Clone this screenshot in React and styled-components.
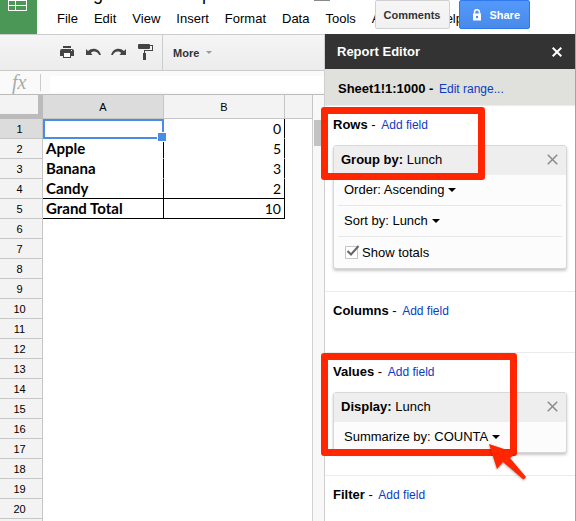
import React from "react";
import styled, { createGlobalStyle, css } from "styled-components";

const GlobalStyle = createGlobalStyle`
  * { box-sizing: border-box; }
  body {
    margin: 0;
    background: #fff;
    color: #000;
    font: 13px/20px "Liberation Sans", Arial, sans-serif;
  }
  button, input { font: inherit; }
`;

const Page = styled.div`
  height: 100vh;
  display: flex;
  flex-direction: column;
  overflow: hidden;
  border-right: 1px solid #a3a3a3;
`;

const Header = styled.header`
  position: relative;
  display: flex;
  flex: none;
  height: 34px;
`;

const Logo = styled.a`
  flex: none;
  width: 37px;
  background: #4b9856;
  svg { display: block; }
`;

const Heading = styled.div`
  flex: 1;
  min-width: 0;
  padding-left: 20px;
`;

const DocTitle = styled.div`
  display: flex;
  align-items: flex-end;
  height: 4px;
  overflow: hidden;
  font-size: 18px;
  white-space: nowrap;
  svg { flex: none; margin-left: 36px; }
`;

const Menu = styled.nav`
  display: flex;
  gap: 16px;
  padding-top: 5px;
`;

const MenuItem = styled.button`
  padding: 0;
  border: 0;
  background: none;
  color: #000;
  line-height: 20px;
  white-space: nowrap;
`;

const HeaderActions = styled.div`
  position: absolute;
  top: 0;
  right: 45px;
  display: flex;
  gap: 9px;
`;

const ActionButton = styled.button`
  display: flex;
  align-items: center;
  gap: 7px;
  height: 29px;
  padding: 0 9px 0 8px;
  border: 1px solid #d0d0d0;
  border-radius: 2px;
  background: linear-gradient(#f6f6f6, #f1f1f1);
  color: #333;
  font-size: 11px;
  font-weight: bold;
  ${(p) =>
    p.$primary &&
    css`
      padding: 0 9px 0 12px;
      border-color: #3079ed;
      background: linear-gradient(#5398fb, #4a8be9);
      color: #fff;
    `}
`;

const Workspace = styled.div`
  display: flex;
  flex: 1;
  min-height: 0;
`;

const SheetArea = styled.main`
  flex: 1;
  min-width: 0;
  display: flex;
  flex-direction: column;
`;

const Toolbar = styled.div`
  display: flex;
  align-items: center;
  flex: none;
  height: 37px;
  border-top: 1px solid #ccc;
  border-bottom: 1px solid #ccc;
  background: linear-gradient(#f5f5f5, #ececec);
`;

const ToolGroup = styled.div`
  display: flex;
  align-items: center;
  gap: 8px;
  height: 100%;
  padding: 0 8px 0 58px;
  border-right: 1px solid #ccc;
`;

const ToolButton = styled.button`
  display: flex;
  padding: 0;
  border: 0;
  background: none;
  color: #444;
`;

const MoreButton = styled(ToolButton)`
  align-items: center;
  gap: 7px;
  padding: 0 10px;
  color: #333;
  font-size: 11px;
  font-weight: bold;
`;

const Caret = styled.span`
  display: inline-block;
  vertical-align: middle;
  border: solid transparent;
  border-width: 4px 4px 0;
  border-top-color: ${(p) => (p.$muted ? "#999" : "#000")};
  ${(p) => p.$muted && "border-width: 3px 3px 0;"}
`;

const FormulaBar = styled.div`
  display: flex;
  align-items: center;
  flex: none;
  height: 24px;
  border-bottom: 1px solid #bbb;
  background: #fafafa;
`;

const FormulaLabel = styled.label`
  width: 41px;
  padding-left: 12px;
  border-right: 1px solid #ccc;
  color: #aaa;
  font: italic 20px/17px "Liberation Serif", "Times New Roman", serif;
`;

const FormulaInput = styled.input`
  flex: 1;
  min-width: 0;
  height: 16px;
  margin: 2px 0 0 9px;
  padding: 0 4px;
  border: 0;
  background: #fff;
`;

const GridArea = styled.div`
  display: flex;
  flex: 1;
  min-height: 0;
  overflow: hidden;
`;

const Grid = styled.table`
  flex: 1;
  align-self: flex-start;
  table-layout: fixed;
  border-spacing: 0;
  width: 100%;
  th, td { height: 20px; padding: 0; }
`;

const Column = styled.col`
  width: ${(p) => p.$width};
`;

const headerLine = css`
  border-right: 1px solid #c6c6c6;
  border-bottom: 1px solid #c6c6c6;
  background: ${(p) => (p.$active ? "#dcdcdc" : "#f3f3f3")};
  font-size: 11px;
  font-weight: normal;
  line-height: 18px;
  text-align: center;
`;

const ColumnHeader = styled.th`
  ${headerLine}
  && { height: 24px; }
`;

const Corner = styled(ColumnHeader)`
  border-right: 5px solid #bbb;
  border-bottom: 5px solid #bbb;
`;

const RowHeader = styled.th`
  ${headerLine}
  && { padding-right: 3px; }
`;

const Cell = styled.td`
  position: relative;
  border-right: 1px solid ${(p) => (p.$framed ? "#000" : "transparent")};
  border-bottom: 1px solid ${(p) => (p.$ruled ? "#000" : "transparent")};
  font: ${(p) => (p.$number ? "normal 14px" : "bold 15px")}/19px Lato, Carlito, sans-serif;
  text-align: ${(p) => (p.$number ? "right" : "left")};
  white-space: nowrap;
  &&& { padding: 0 3px; }
`;

const EdgeCell = styled.td`
  border-right: 1px solid #d0d0d0;
`;

const Selection = styled.div`
  position: absolute;
  z-index: 1;
  inset: 0 -1px -1px 0;
  border: 2px solid #4a8be4;
  &::after {
    content: "";
    position: absolute;
    right: -5px;
    bottom: -5px;
    width: 8px;
    height: 8px;
    border: 1px solid #fff;
    background: #4a8be4;
  }
`;

const ScrollTrack = styled.div`
  flex: none;
  width: 11px;
  padding: 25px 1px 0;
  background: #f8f8f8;
`;

const ScrollThumb = styled.div`
  height: 26px;
  background: #c3c3c3;
`;

const Panel = styled.aside`
  flex: none;
  width: 251px;
  border-left: 1px solid #d0d0d0;
  background: #fff;
`;

const PanelHeader = styled.div`
  display: flex;
  align-items: center;
  justify-content: space-between;
  height: 35px;
  padding: 0 13px 0 12px;
  background: #333;
  color: #fff;
`;

const PanelTitle = styled.h2`
  margin: 0;
  font-size: 13px;
`;

const IconButton = styled.button`
  display: flex;
  padding: 0;
  border: 0;
  background: none;
  color: ${(p) => (p.$light ? "#fff" : "#8c8c8c")};
`;

const RangeBar = styled.div`
  height: 37px;
  padding: 10px 13px 9px;
  border-bottom: 1px solid #ececec;
  background: #e0e1dc;
`;

const PanelLink = styled.a`
  margin-left: 2px;
  color: #0b3cc1;
  font-size: 12px;
  text-decoration: none;
`;

const Section = styled.section`
  position: relative;
  min-height: 61px;
  padding: 9px 8px 22px;
  border-bottom: 1px solid #ebebeb;
`;

const SectionTitle = styled.div`
  line-height: 20px;
`;

const Card = styled.div`
  margin-top: 10px;
  border: 1px solid #d8d8d8;
  border-radius: 3px;
  background: #fcfcfc;
  box-shadow: 0 2px 3px rgba(0, 0, 0, 0.22);
`;

const CardHeader = styled.div`
  display: flex;
  align-items: center;
  justify-content: space-between;
  height: 29px;
  padding: 0 8px 2px 7px;
  background: #eee;
`;

const CardRow = styled.div`
  display: flex;
  align-items: center;
  height: 31px;
  margin: 0 4px;
  padding-left: 6px;
  border-bottom: 1px solid #e8e8e8;
  &:last-child {
    height: ${(p) => (p.$tall ? 31 : 30)}px;
    border-bottom: 0;
  }
`;

const Picker = styled.button`
  display: flex;
  align-items: center;
  gap: 4px;
  padding: 0;
  border: 0;
  background: none;
  color: #000;
`;

const CheckLabel = styled.label`
  display: flex;
  align-items: center;
  gap: 4px;
`;

const CheckBox = styled.span`
  position: relative;
  display: flex;
  width: 14px;
  height: 14px;
  input {
    appearance: none;
    width: 13px;
    height: 13px;
    margin: 0 0 0 1px;
    border: 1px solid #c6c6c6;
    background: #fff;
  }
  svg {
    position: absolute;
    left: 2px;
    top: -1px;
    display: none;
    pointer-events: none;
  }
  input:checked + svg { display: block; }
`;

const Highlight = styled.div`
  position: absolute;
  z-index: 2;
  left: -4px;
  top: ${(p) => p.$top}px;
  width: ${(p) => p.$width}px;
  height: ${(p) => p.$height}px;
  border: 7px solid #ff2600;
  border-radius: 3px;
  pointer-events: none;
`;

const Pointer = styled.svg`
  position: absolute;
  z-index: 3;
  left: 163px;
  top: 90px;
  filter: drop-shadow(0 1px 1px rgba(0, 0, 0, 0.35));
`;

const Cross = ({ size = 10, weight = 1.6 }) => (
  <svg width={size} height={size} viewBox="0 0 10 10" fill="none" stroke="currentColor" strokeWidth={weight}>
    <path d="M.7.7 9.3 9.3M9.3.7.7 9.3" />
  </svg>
);

const PrintIcon = () => (
  <svg width="18" height="18" viewBox="0 0 18 18" fill="currentColor">
    <path d="M5 2h8v2H5zM4 5h10q2 0 2 2v5h-3v-3H5v3H2V7q0-2 2-2z" />
    <path d="M6 9h6v4H6z" fill="#fafafa" />
    <path d="M5 9h1v4h6V9h1v5H5z" />
    <path d="M13 6h1v1h-1z" fill="#eee" />
  </svg>
);

const UndoIcon = ({ mirrored }) => (
  <svg width="18" height="18" viewBox="0 0 18 18" fill="currentColor">
    <path
      transform={mirrored ? "matrix(-1 0 0 1 18 0)" : undefined}
      d="M2 5l2 2C6.500 4.800 9 4.300 11.500 5c2.800.8 4.600 2.800 5.400 6h-1.800c-1-2.200-2.600-3.300-4.600-3.400-1.600 0-2.600.5-3.600 1.400L8.500 11H2z"
    />
  </svg>
);

const PaintIcon = () => (
  <svg width="18" height="18" viewBox="0 0 18 18" fill="currentColor">
    <path d="M3 0h10q1 0 1 1v3q0 1-1 1H3Q2 5 2 4V1q0-1 1-1z" />
    <path d="M14 1h3v6H9v3H8V6h8V2h-2zM7 9h3v7H7z" />
  </svg>
);

const SheetIcon = () => (
  <svg width="37" height="14" viewBox="0 0 37 14" fill="none" stroke="#fff">
    <path d="M8.500 0v10.500h18V0M8 .5h19M8 5.500h19M15.500 0v10" />
  </svg>
);

const LockIcon = () => (
  <svg width="10" height="12" viewBox="0 0 10 12">
    <path d="M2.500 5V3.200a2.500 2.500 0 0 1 5 0V5" fill="none" stroke="#fff" strokeWidth="1.500" />
    <path d="M1 4.500h8v7H1z" fill="#fff" />
    <circle cx="5" cy="8" r="1.200" fill="#4a8be9" />
  </svg>
);

const FolderIcon = () => (
  <svg width="16" height="18" viewBox="0 0 16 18" fill="#8a8a8a">
    <path d="M0 1h6l2 2h8v12H0z" />
  </svg>
);

const menus = ["File", "Edit", "View", "Insert", "Format", "Data", "Tools", "Add-ons", "Help"];

const data = [
  ["", "0"],
  ["Apple", "5"],
  ["Banana", "3"],
  ["Candy", "2"],
  ["Grand Total", "10"],
];

const rowNumbers = Array.from({ length: 21 }, (_, i) => i + 1);

function SheetRow({ number }) {
  const values = data[number - 1];
  const ruled = number === 4 || number === 5;
  return (
    <tr>
      <RowHeader scope="row" $active={number === 1}>{number}</RowHeader>
      <Cell $framed={!!values} $ruled={ruled}>
        {values?.[0]}
        {number === 1 && <Selection />}
      </Cell>
      <Cell $number $framed={!!values} $ruled={ruled}>{values?.[1]}</Cell>
      <EdgeCell />
    </tr>
  );
}

function FieldTitle({ name }) {
  return (
    <SectionTitle>
      <b>{name}</b> - <PanelLink href="#add">Add field</PanelLink>
    </SectionTitle>
  );
}

function FieldHeader({ label, value }) {
  return (
    <CardHeader>
      <span><b>{label}</b> {value}</span>
      <IconButton aria-label="Remove field"><Cross size={11} weight={1.4} /></IconButton>
    </CardHeader>
  );
}

function Option({ children }) {
  return (
    <CardRow>
      <Picker>{children}<Caret /></Picker>
    </CardRow>
  );
}

export default function App() {
  return (
    <>
      <GlobalStyle />
      <Page>
        <Header>
          <Logo href="#home" aria-label="Sheets home"><SheetIcon /></Logo>
          <Heading>
            <DocTitle>Design Form Sample Sheet<FolderIcon /></DocTitle>
            <Menu>
              {menus.map((name) => <MenuItem key={name}>{name}</MenuItem>)}
            </Menu>
          </Heading>
          <HeaderActions>
            <ActionButton>Comments</ActionButton>
            <ActionButton $primary><LockIcon />Share</ActionButton>
          </HeaderActions>
        </Header>
        <Workspace>
          <SheetArea>
            <Toolbar>
              <ToolGroup>
                <ToolButton aria-label="Print"><PrintIcon /></ToolButton>
                <ToolButton aria-label="Undo"><UndoIcon /></ToolButton>
                <ToolButton aria-label="Redo"><UndoIcon mirrored /></ToolButton>
                <ToolButton aria-label="Paint format"><PaintIcon /></ToolButton>
              </ToolGroup>
              <MoreButton>More<Caret $muted /></MoreButton>
            </Toolbar>
            <FormulaBar>
              <FormulaLabel htmlFor="formula">fx</FormulaLabel>
              <FormulaInput id="formula" />
            </FormulaBar>
            <GridArea>
              <Grid>
                <colgroup>
                  <Column $width="43px" />
                  <Column $width="121px" />
                  <Column $width="121px" />
                  <Column $width="auto" />
                </colgroup>
                <thead>
                  <tr>
                    <Corner />
                    <ColumnHeader scope="col" $active>A</ColumnHeader>
                    <ColumnHeader scope="col">B</ColumnHeader>
                    <ColumnHeader />
                  </tr>
                </thead>
                <tbody>
                  {rowNumbers.map((n) => <SheetRow key={n} number={n} />)}
                </tbody>
              </Grid>
              <ScrollTrack><ScrollThumb /></ScrollTrack>
            </GridArea>
          </SheetArea>
          <Panel>
            <PanelHeader>
              <PanelTitle>Report Editor</PanelTitle>
              <IconButton $light aria-label="Close"><Cross weight={2} /></IconButton>
            </PanelHeader>
            <RangeBar>
              <b>Sheet1!1:1000 -</b> <PanelLink href="#range">Edit range...</PanelLink>
            </RangeBar>
            <Section>
              <FieldTitle name="Rows" />
              <Card>
                <FieldHeader label="Group by:" value="Lunch" />
                <Option>Order: Ascending</Option>
                <Option>Sort by: Lunch</Option>
                <CardRow $tall>
                  <CheckLabel>
                    <CheckBox>
                      <input type="checkbox" defaultChecked />
                      <svg width="14" height="12" viewBox="0 0 14 12" fill="none" stroke="#666" strokeWidth="2">
                        <path d="M1.500 6l3.500 3.500L12.500 1" />
                      </svg>
                    </CheckBox>
                    Show totals
                  </CheckLabel>
                </CardRow>
              </Card>
              <Highlight $top={1} $width={164} $height={73} />
            </Section>
            <Section>
              <FieldTitle name="Columns" />
            </Section>
            <Section>
              <FieldTitle name="Values" />
              <Card>
                <FieldHeader label="Display:" value="Lunch" />
                <Option>Summarize by: COUNTA</Option>
              </Card>
              <Highlight $top={0} $width={196} $height={103} />
              <Pointer width="40" height="38" viewBox="0 0 40 38" fill="#ff2600">
                <path d="M1 1l27 9-6 5 16 19-2.500 2.500L15 19 9 26z" />
              </Pointer>
            </Section>
            <Section>
              <FieldTitle name="Filter" />
            </Section>
          </Panel>
        </Workspace>
      </Page>
    </>
  );
}
